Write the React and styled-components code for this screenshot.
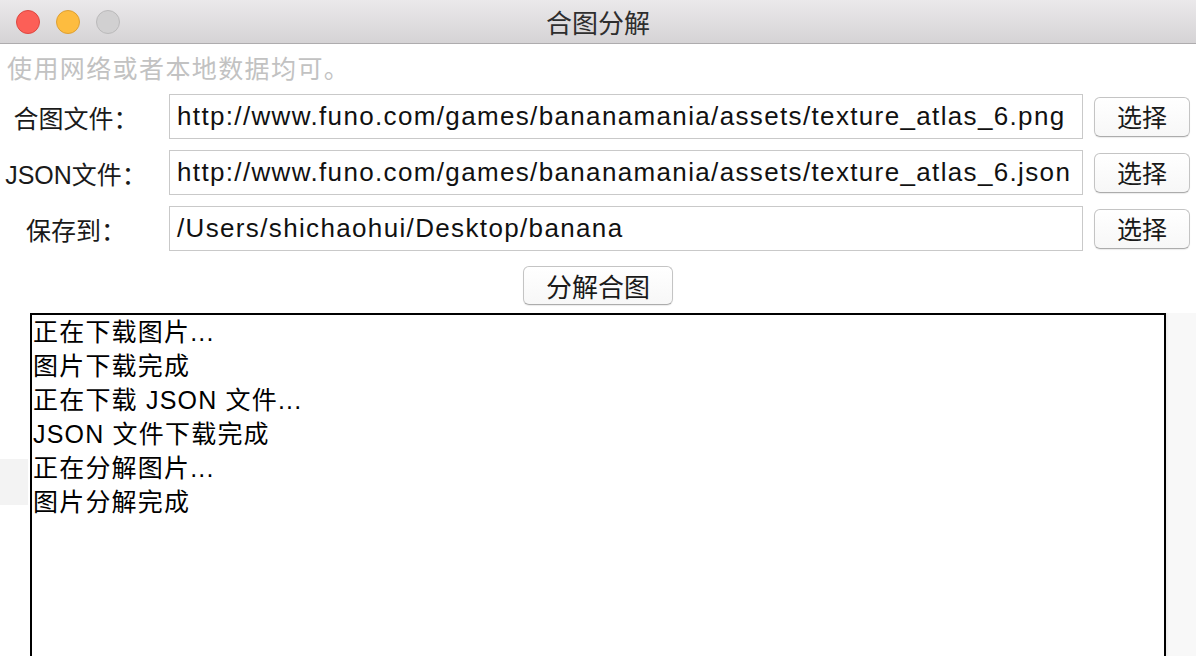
import React from "react";
import styled, { createGlobalStyle } from "styled-components";

const Global = createGlobalStyle`
  html, body { margin: 0; padding: 0; background: #ffffff; }
  body {
    width: 1196px; height: 656px; overflow: hidden;
    font-family: "Liberation Sans", "Noto Sans CJK SC", sans-serif;
  }
  * { box-sizing: border-box; }
`;

const Window = styled.div`
  width: 1196px;
  height: 656px;
  display: flex;
  flex-direction: column;
  background: #ffffff;
  overflow: hidden;
`;

const TitleBar = styled.div`
  height: 44px;
  flex: none;
  display: grid;
  grid-template-columns: 1fr auto 1fr;
  align-items: center;
  background: linear-gradient(#ebe9eb, #d5d3d5);
  border-bottom: 1px solid #aeacae;
  padding: 0 16px;
`;

const Lights = styled.div`
  display: flex;
  gap: 16px;
`;

const Light = styled.span`
  width: 24px;
  height: 24px;
  border-radius: 50%;
  background: ${p => p.$bg};
  border: 1px solid ${p => p.$bd};
`;

const Title = styled.div`
  font-size: 26px;
  color: #2e2e2e;
  font-family: "Noto Sans CJK SC", sans-serif;
  line-height: 1;
`;

const Hint = styled.div`
  font-size: 25px;
  letter-spacing: 1.4px;
  color: #c2c2c2;
  padding: 4px 0 0 7px;
  height: 50px;
  line-height: 38px;
  font-family: "Noto Sans CJK SC", sans-serif;
`;

const Form = styled.div`
  display: flex;
  flex-direction: column;
  gap: 11px;
`;

const Row = styled.div`
  display: flex;
  align-items: center;
`;

const Label = styled.div`
  width: 152px;
  flex: none;
  font-size: 25px;
  color: #1a1a1a;
  text-align: center;
  white-space: nowrap;
  margin-right: 17px;
`;

const Field = styled.div`
  height: 45px;
  width: 914px;
  flex: none;
  border: 1px solid #c9c9c9;
  background: #fff;
  font-size: 26px;
  letter-spacing: 1.35px;
  color: #111;
  line-height: 43px;
  padding-left: 7px;
  white-space: nowrap;
  overflow: hidden;
`;

const Button = styled.button`
  flex: none;
  height: ${p => p.$h || 40}px;
  width: ${p => p.$w || 96}px;
  margin-left: ${p => p.$ml || 0}px;
  border: 1px solid #c4c4c4;
  border-bottom-color: #acacac;
  border-radius: 6px;
  background: linear-gradient(#ffffff, #f7f7f7);
  box-shadow: 0 1px 1px rgba(0,0,0,0.08);
  font-size: ${p => p.$fs || 25}px;
  color: #1a1a1a;
  font-family: "Noto Sans CJK SC", sans-serif;
  padding: 0;
  line-height: 1;
`;

const Center = styled.div`
  display: flex;
  justify-content: center;
  padding: 15px 0 8px;
`;

const LogArea = styled.div`
  flex: 1;
  display: grid;
  grid-template-columns: 30px 1136px 30px;
  min-height: 0;
`;

const Gutter = styled.div`
  padding-top: 146px;
`;

const Patch = styled.div`
  width: 28px;
  height: 46px;
  background: #f3f3f3;
`;

const Log = styled.div`
  border: 2px solid #000;
  background: #fff;
  padding: 0 0 0 1px;
  font-size: 25px;
  letter-spacing: 1.2px;
  line-height: 34px;
  color: #000;
  height: 400px;
`;

const Strip = styled.div`
  background: linear-gradient(90deg, #ececec 0, #f8f8f8 3px, #f8f8f8 100%);
`;

const LogLine = styled.div`
  white-space: pre;
`;

const rows = [
  ["合图文件：", "http://www.funo.com/games/bananamania/assets/texture_atlas_6.png"],
  ["JSON文件：", "http://www.funo.com/games/bananamania/assets/texture_atlas_6.json"],
  ["保存到：", "/Users/shichaohui/Desktop/banana"],
];

const logs = [
  "正在下载图片...",
  "图片下载完成",
  "正在下载 JSON 文件...",
  "JSON 文件下载完成",
  "正在分解图片...",
  "图片分解完成",
];

export default function App() {
  return (
    <Window>
      <Global />
      <TitleBar>
        <Lights>
          <Light $bg="#fc5f57" $bd="#de4740" />
          <Light $bg="#fdbc3f" $bd="#dea033" />
          <Light $bg="#d1d0d1" $bd="#bbbabb" />
        </Lights>
        <Title>合图分解</Title>
        <div />
      </TitleBar>
      <Hint>使用网络或者本地数据均可。</Hint>
      <Form>
        {rows.map(([l, v]) => (
          <Row key={l}>
            <Label>{l}</Label>
            <Field>{v}</Field>
            <Button $ml={11} $w={96}>选择</Button>
          </Row>
        ))}
      </Form>
      <Center>
        <Button $w={150} $h={39} $fs={26}>分解合图</Button>
      </Center>
      <LogArea>
        <Gutter><Patch /></Gutter>
        <Log>
          {logs.map(t => <LogLine key={t}>{t}</LogLine>)}
        </Log>
        <Strip />
      </LogArea>
    </Window>
  );
}
